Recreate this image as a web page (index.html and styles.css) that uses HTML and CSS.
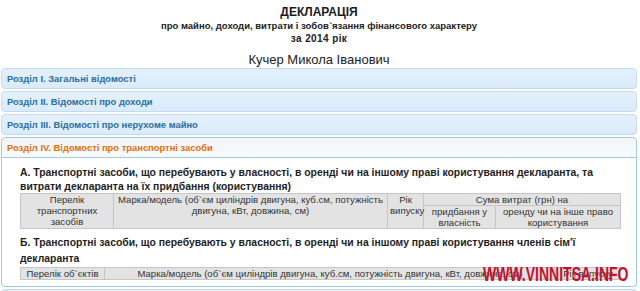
FILE: index.html
```html
<!DOCTYPE html>
<html lang="uk">
<head>
<meta charset="utf-8">
<title>Декларація</title>
<link rel="stylesheet" href="styles.css">
</head>
<body>
<div class="page">
  <header class="doc-head">
    <div class="doc-title">ДЕКЛАРАЦІЯ</div>
    <div class="doc-sub">про майно, доходи, витрати і зобов`язання фінансового характеру</div>
    <div class="doc-sub doc-year">за 2014 рік</div>
    <div class="doc-name">Кучер Микола Іванович</div>
  </header>
  <div class="accordion">
    <div class="acc-h">Розділ I. Загальні відомості</div>
    <div class="acc-h">Розділ II. Відомості про доходи</div>
    <div class="acc-h">Розділ III. Відомості про нерухоме майно</div>
    <div class="acc-h active">Розділ IV. Відомості про транспортні засоби</div>
    <div class="acc-c">
      <h3 class="sec sec-a">А. Транспортні засоби, що перебувають у власності, в оренді чи на іншому праві користування декларанта, та витрати декларанта на їх придбання (користування)</h3>
      <table class="grid">
        <colgroup>
          <col class="c-a1"><col class="c-a2"><col class="c-a3"><col class="c-a4"><col class="c-a5">
        </colgroup>
        <tr>
          <th rowspan="2">Перелік транспортних засобів</th>
          <th rowspan="2">Марка/модель (об`єм циліндрів двигуна, куб.см, потужність двигуна, кВт, довжина, см)</th>
          <th rowspan="2">Рік випуску</th>
          <th colspan="2">Сума витрат (грн) на</th>
        </tr>
        <tr>
          <th>придбання у власність</th>
          <th>оренду чи на інше право користування</th>
        </tr>
      </table>
      <h3 class="sec sec-b">Б. Транспортні засоби, що перебувають у власності, в оренді чи на іншому праві користування членів сім'ї декларанта</h3>
      <table class="grid">
        <colgroup>
          <col class="c-b1"><col class="c-b2"><col class="c-b3">
        </colgroup>
        <tr>
          <th>Перелік об`єктів</th>
          <th>Марка/модель (об`єм циліндрів двигуна, куб.см, потужність двигуна, кВт, довжина, см)</th>
          <th>Рік випуску</th>
        </tr>
      </table>
    </div>
    <div class="acc-h">Розділ V. Відомості про вклади у банках, цінні папери та інші активи</div>
  </div>
  <div class="watermark">WWW.VINNITSA.INFO</div>
</div>
</body>
</html>
```

FILE: styles.css
```css
html, body {
  margin: 0;
  padding: 0;
  background: #ffffff;
  overflow: hidden;
}
body {
  font-family: "Liberation Sans", Arial, sans-serif;
  color: #222222;
}
.page {
  position: relative;
  padding: 5px 3px 0 1px;
}
.doc-head {
  text-align: center;
}
.doc-title {
  font-size: 12px;
  font-weight: bold;
  line-height: 14px;
  color: #1a1a1a;
}
.doc-sub {
  font-size: 9.5px;
  font-weight: bold;
  line-height: 13px;
  color: #222222;
}
.doc-year {
  font-size: 10px;
  letter-spacing: 0.4px;
}
.doc-name {
  margin-top: 7px;
  font-size: 13px;
  line-height: 16px;
  color: #222222;
}
.accordion {
  display: flex;
  flex-direction: column;
}
.acc-h {
  margin-top: 2px;
  padding: 3px 5px;
  font-size: 9.4px;
  font-weight: bold;
  line-height: 13px;
  color: #2e6e9e;
  background: linear-gradient(#e4f1fc, #d9ebfa);
  border: 1px solid #c5dbec;
  border-radius: 4px;
  white-space: nowrap;
  overflow: hidden;
}
.accordion .acc-h:first-child {
  margin-top: 0;
}
.acc-h.active {
  color: #e17009;
  background: linear-gradient(#f1f6f9, #f8fafb);
  border-color: #a6c9e2;
  border-bottom-left-radius: 0;
  border-bottom-right-radius: 0;
}
.acc-c {
  padding: 8px 16px 6px 18px;
  background: #ffffff;
  border: 1px solid #a6c9e2;
  border-top: 0;
  border-radius: 0 0 4px 4px;
}
.sec {
  margin: 0;
  padding-right: 14px;
  font-size: 10.4px;
  font-weight: bold;
  color: #1e1e1e;
}
.sec-a {
  line-height: 13.5px;
}
.sec-b {
  margin-top: 6px;
  line-height: 16px;
}
.grid {
  width: 600px;
  border-collapse: collapse;
  table-layout: fixed;
}
.grid th {
  padding: 0 2px;
  font-size: 9.6px;
  font-weight: normal;
  line-height: 11px;
  color: #333333;
  text-align: center;
  vertical-align: top;
  background: #e3e3e3;
  border: 1px solid #c6c6c6;
}
.c-a1 { width: 93px; }
.c-a2 { width: 274px; }
.c-a3 { width: 36px; }
.c-a4 { width: 72px; }
.c-a5 { width: 125px; }
.c-b1 { width: 84px; }
.c-b2 { width: 451px; }
.c-b3 { width: 65px; }
.watermark {
  position: absolute;
  left: 483px;
  top: 264px;
  font-size: 20px;
  font-weight: bold;
  line-height: 20px;
  color: #c3122d;
  white-space: nowrap;
  transform: scaleX(0.7);
  transform-origin: left top;
}
```
